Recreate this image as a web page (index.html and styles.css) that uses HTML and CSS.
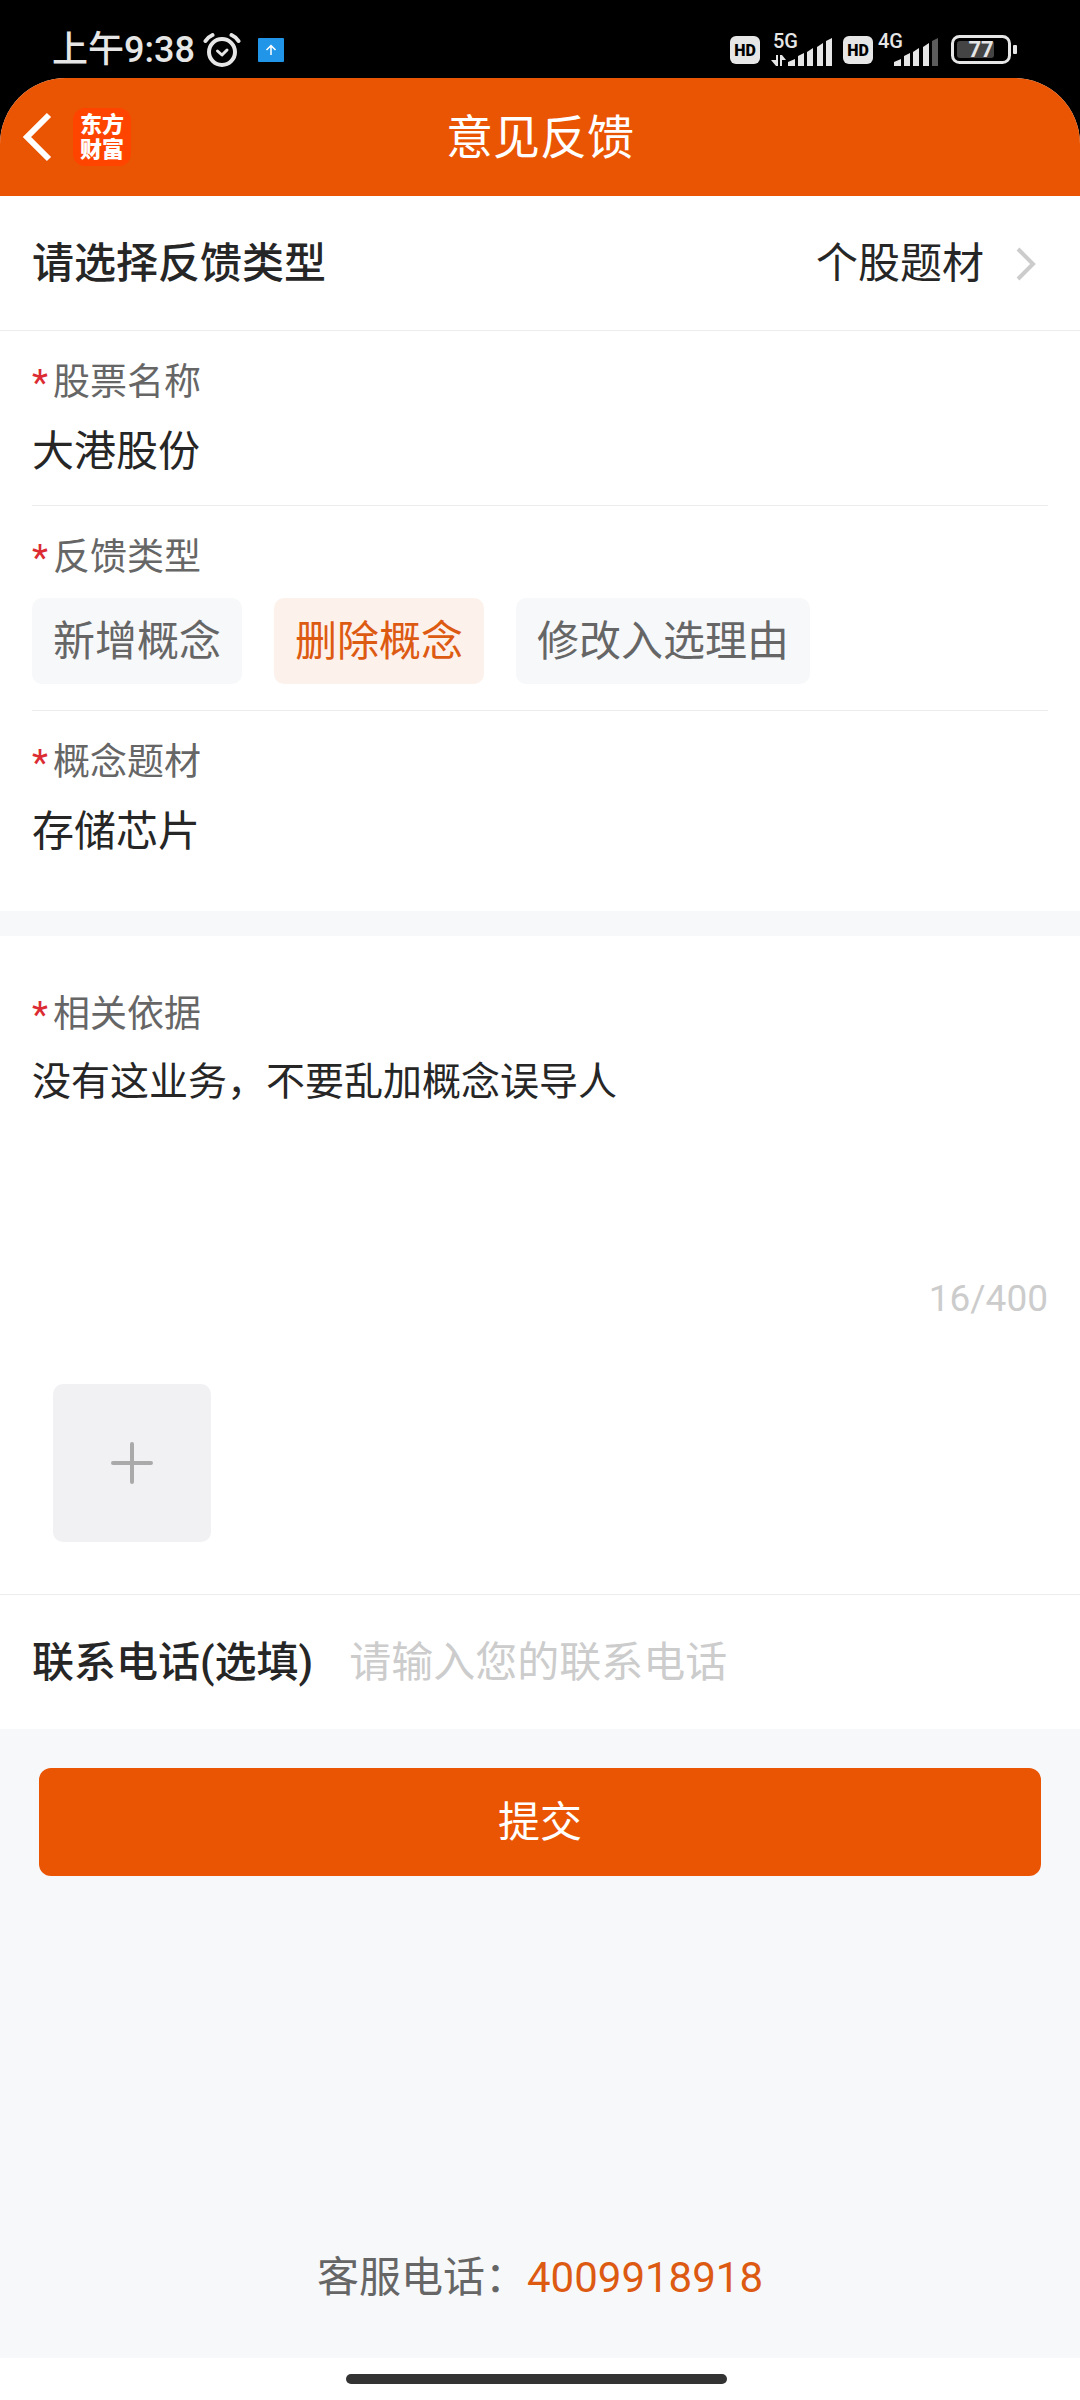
FILE: index.html
```html
<!DOCTYPE html>
<html lang="zh-CN">

<head>
  <meta charset="UTF-8">
  <meta name="viewport" content="width=device-width, initial-scale=1.0">
  <title>意见反馈</title>
  <link rel="stylesheet" href="styles.css">
</head>

<body>

  <div class="status">
    <div class="status-left">
      <span class="clock">上午9:38</span>
      <svg class="alarm" width="38" height="36" viewBox="0 0 38 36" fill="none" stroke="#e6e6e6" stroke-linecap="round" stroke-linejoin="round">
        <circle cx="19" cy="20" r="13" stroke-width="4" />
        <path d="M14.500 19 l4.500 4 l5-5" stroke-width="3" />
        <path d="M2.500 9 Q5 5 9.500 3 M28.500 3 Q33 5 35.500 9" stroke-width="4" />
      </svg>
      <svg width="26" height="24" viewBox="0 0 26 24">
        <rect width="26" height="24" rx="1" fill="#2196e8" />
        <path d="M13 17V8 M8.500 12 L13 7.500 L17.500 12" fill="none" stroke="#fff" stroke-width="1.500" />
      </svg>
    </div>
    <div class="status-right">
      <span class="hd">HD</span>
      <svg class="signal" width="62" height="50" viewBox="0 -7 62 50" fill="#e6e6e6">
        <text x="3" y="16" class="net">5G</text>
        <path d="M6 23h2v11h-2l-5-6h5z M10 23h2l4 5h-4v6h-2z" />
        <path d="M18 34v-4l7-3v7z M28 34v-10l6-3v13z M37 34v-14l6-4v18z M47 34v-19l6-4v23z M56 34v-25l6-3v28z" />
      </svg>
      <span class="hd">HD</span>
      <svg class="signal-2" width="62" height="50" viewBox="0 -7 62 50" fill="#e6e6e6">
        <text x="0" y="16" class="net">4G</text>
        <path d="M16 34v-4l7-3v7z M26 34v-10l6-3v13z M35 34v-14l6-4v18z M45 34v-19l6-4v23z" />
        <path d="M54 34v-25l6-3v28z" fill="#5c5c5c" />
      </svg>
      <svg class="battery" width="66" height="30" viewBox="0 0 66 30">
        <rect x="1.500" y="1.500" width="57" height="26" rx="7" fill="none" stroke="#e6e6e6" stroke-width="3" />
        <rect x="6" y="6" width="37" height="17" rx="3" fill="#444" />
        <rect x="62" y="10" width="4" height="9" rx="1" fill="#e6e6e6" />
        <text x="30" y="22" class="level">77</text>
      </svg>
    </div>
  </div>

  <div class="screen">
    <header class="header">
      <div class="header-left">
        <button type="button" class="back" aria-label="返回">
          <svg width="29" height="50" viewBox="0 0 29 50" fill="none" stroke="#fff" stroke-width="6">
            <path d="M26 3 L4 25 L26 47" />
          </svg>
        </button>
        <div class="logo">东方<br>财富</div>
      </div>
      <h1 class="title">意见反馈</h1>
    </header>

    <form class="form">
      <div class="row line">
        <span class="row-label" id="type-label">请选择反馈类型</span>
        <button type="button" class="picker" aria-describedby="type-label">
          个股题材
          <svg width="20" height="34" viewBox="0 0 20 34" fill="none" stroke="#ccc" stroke-width="4">
            <path d="M2 2 L17 17 L2 32" />
          </svg>
        </button>
      </div>

      <div class="group">
        <div class="field line">
          <label class="label" for="stock"><span class="star">*</span>股票名称</label>
          <input class="value" id="stock" type="text" value="大港股份">
        </div>
        <div class="field line">
          <div class="label" id="kind"><span class="star">*</span>反馈类型</div>
          <div class="chips" role="group" aria-labelledby="kind">
            <button type="button" class="chip" aria-pressed="false">新增概念</button>
            <button type="button" class="chip active" aria-pressed="true">删除概念</button>
            <button type="button" class="chip" aria-pressed="false">修改入选理由</button>
          </div>
        </div>
        <div class="field last">
          <label class="label" for="concept"><span class="star">*</span>概念题材</label>
          <input class="value" id="concept" type="text" value="存储芯片">
        </div>
      </div>

      <div class="reason line">
        <label class="label" for="reason"><span class="star">*</span>相关依据</label>
        <textarea class="reason-text" id="reason" maxlength="400">没有这业务，不要乱加概念误导人</textarea>
        <div class="count">16/400</div>
        <button type="button" class="add" aria-label="添加图片">
          <svg width="42" height="42" viewBox="0 0 42 42" stroke="#aaa" stroke-width="4" stroke-linecap="round">
            <path d="M21 2v38 M2 21h38" />
          </svg>
        </button>
      </div>

      <div class="row">
        <label class="row-label" for="phone">联系电话(选填)</label>
        <input class="phone" id="phone" type="tel" placeholder="请输入您的联系电话">
      </div>

      <div class="bottom">
        <button type="submit" class="submit">提交</button>
        <p class="service">客服电话：<a href="tel:4009918918">4009918918</a></p>
      </div>
    </form>
  </div>

  <div class="home">
    <div class="home-bar"></div>
  </div>

</body>

</html>
```
FILE: styles.css
```css
* {
  margin: 0;
  padding: 0;
  box-sizing: border-box;
}

body {
  min-height: 100vh;
  display: flex;
  flex-direction: column;
  background-color: #000;
  color: #262626;
  font-family: Roboto, "Noto Sans CJK SC", sans-serif;
  font-size: 42px;
  line-height: 60px;
}

button,
input,
textarea {
  border: none;
  outline: none;
  background: none;
  color: inherit;
  font: inherit;
}

svg {
  display: block;
}

/* 状态栏 */
.status {
  height: 78px;
  padding: 22px 63px 0 52px;
  display: flex;
  justify-content: space-between;
  color: #e6e6e6;
}

.status-left,
.status-right {
  display: flex;
  align-items: center;
  height: 56px;
}

.clock {
  font-size: 36px;
  font-weight: 500;
}

.alarm {
  margin: 0 17px 0 8px;
}

.hd {
  width: 30px;
  height: 28px;
  border-radius: 6px;
  background-color: #e6e6e6;
  color: #000;
  font-size: 16px;
  font-weight: 900;
  line-height: 29px;
  text-align: center;
}

.signal {
  margin: 0 11px 0 10px;
}

.signal-2 {
  margin: 0 11px 0 5px;
}

.net {
  font-size: 20px;
  font-weight: 500;
}

.level {
  font-size: 22px;
  font-weight: 700;
  fill: #e6e6e6;
  text-anchor: middle;
}

/* 标题栏 */
.screen {
  flex: 1;
  display: flex;
  flex-direction: column;
  border-radius: 66px 66px 0 0;
  overflow: hidden;
  background-color: #f7f8fa;
}

.header {
  height: 118px;
  padding: 0 23px;
  display: grid;
  grid-template-columns: 1fr auto 1fr;
  align-items: center;
  background-color: #ea5504;
  color: #fff;
}

.header-left {
  display: flex;
  align-items: center;
  gap: 21px;
}

.logo {
  width: 58px;
  height: 58px;
  padding-top: 4px;
  border-radius: 12px;
  background-color: #ff4400;
  font-size: 22px;
  font-weight: 900;
  line-height: 25px;
  text-align: center;
}

.title {
  padding-top: 2px;
  font-size: 47px;
  font-weight: 400;
}

/* 表单 */
.form {
  flex: 1;
  display: flex;
  flex-direction: column;
}

.line {
  border-bottom: 1px solid #ececec;
}

.row {
  display: flex;
  align-items: center;
  padding: 38px 32px 36px;
  background-color: #fff;
}

.row-label {
  font-weight: 500;
}

.picker {
  margin-left: auto;
  padding-right: 12px;
  display: flex;
  align-items: center;
  gap: 32px;
}

.group {
  padding: 0 32px;
  background-color: #fff;
}

.field {
  padding: 26px 0 23px;
}

.last {
  padding-bottom: 49px;
}

.label {
  display: block;
  color: #666;
  font-size: 37px;
  line-height: 52px;
}

.star {
  margin-right: 5px;
  color: #dc2b32;
}

.value {
  display: block;
  width: 100%;
  height: 60px;
  margin-top: 13px;
}

.chips {
  display: flex;
  gap: 32px;
  margin: 14px 0 3px;
}

.chip {
  padding: 14px 21px 12px;
  border-radius: 10px;
  background-color: #f7f8fa;
  color: #666;
}

.active {
  background-color: #fdf1ec;
  color: #dd5a12;
}

.reason {
  margin-top: 25px;
  padding: 53px 32px 52px;
  background-color: #fff;
}

.reason-text {
  display: block;
  width: 100%;
  height: 218px;
  margin-top: 14px;
  resize: none;
  font-size: 39px;
  line-height: 54px;
}

.count {
  color: #ccc;
  font-size: 37px;
  line-height: 52px;
  text-align: right;
}

.add {
  display: flex;
  align-items: center;
  justify-content: center;
  width: 158px;
  height: 158px;
  margin: 59px 0 0 21px;
  border-radius: 10px;
  background-color: #f1f1f4;
}

.phone {
  flex: 1;
  min-width: 0;
  height: 60px;
  margin-left: 36px;
}

.phone::placeholder {
  color: #ccc;
}

.bottom {
  flex: 1;
  display: flex;
  flex-direction: column;
  justify-content: space-between;
  padding: 39px 39px 50px;
}

.submit {
  padding: 25px 24px 23px;
  border-radius: 12px;
  background-color: #ea5504;
  color: #fff;
}

.service {
  color: #666;
  text-align: center;
}

.service a {
  color: #dd5a12;
  text-decoration: none;
}

.home {
  padding: 16px 7px 16px 0;
  background-color: #fff;
}

.home-bar {
  width: 381px;
  height: 10px;
  margin: 0 auto;
  border-radius: 5px;
  background-color: #333;
}
```
